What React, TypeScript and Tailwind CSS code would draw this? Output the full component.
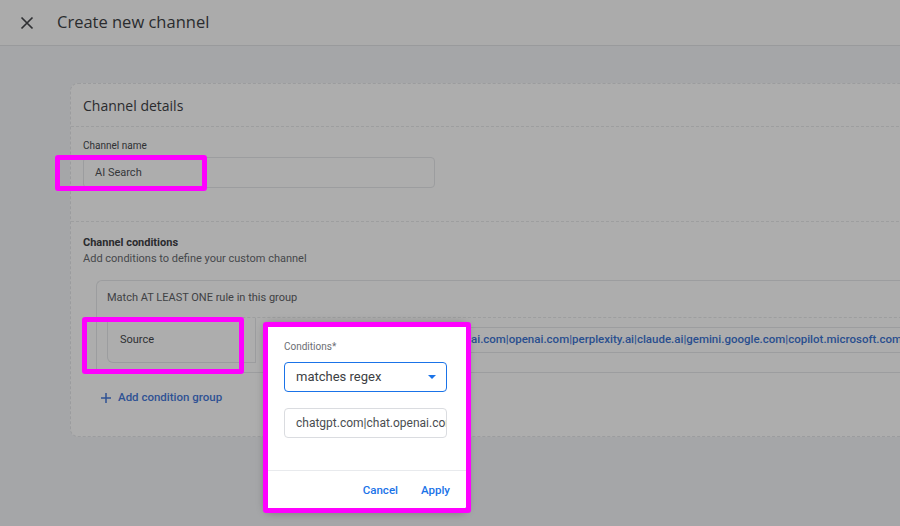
import React from "react";

export default function App() {
  return (
    <div
      className="relative w-[900px] h-[526px] overflow-hidden bg-[#a5a6a8] flex flex-col"
      style={{ fontFamily: "Roboto, 'Noto Sans', Arial, sans-serif" }}
    >
      {/* header */}
      <div className="h-[46px] shrink-0 bg-[#ababab] border-b border-[#999a9c] flex items-center">
        <svg width="14" height="14" viewBox="0 0 14 14" className="ml-[20px]">
          <path d="M1.5 1.5 L12.5 12.5 M12.5 1.5 L1.5 12.5" stroke="#2f3033" strokeWidth="1.7" />
        </svg>
        <span className="ml-[23px] text-[16.5px] text-[#2a2b2e]" style={{ fontFamily: "'Open Sans', Roboto, sans-serif" }}>
          Create new channel
        </span>
      </div>

      {/* main */}
      <div className="flex-1 pt-[37px] pl-[70px]">
        <div className="w-[860px] h-[354px] rounded-[8px] border border-dashed border-[#9b9c9e] bg-[#adadad] flex flex-col">
          <div className="h-[43px] px-[12px] flex items-center border-b border-dashed border-[#9d9e9f]">
            <span className="text-[14px] text-[#2a2b2e]" style={{ fontFamily: "'Open Sans', Roboto, sans-serif" }}>
              Channel details
            </span>
          </div>
          <div className="px-[12px] pt-[13px] pb-[33px] border-b border-dashed border-[#9d9e9f]">
            <div className="text-[10px] leading-[12px] text-[#2e3033]">Channel name</div>
            <div className="mt-[5px] w-[352px] h-[31px] rounded-[4px] border border-[#9c9d9f] flex items-center pl-[11px] pt-[1px] text-[11px] text-[#35373a]">
              AI Search
            </div>
          </div>
          <div className="px-[12px] pt-[14px]">
            <div className="text-[11px] leading-[14px] font-bold text-[#2a2b2e]">Channel conditions</div>
            <div className="text-[11px] leading-[16px] mt-[1px] text-[#46484b]">Add conditions to define your custom channel</div>
            <div className="mt-[13px] ml-[13px] h-[93px] rounded-tl-[6px] border-l border-t border-b border-[#9c9d9f] flex flex-col">
              <div className="h-[37px] shrink-0 flex items-center pl-[10px] pb-[1px] border-b border-dashed border-[#9d9e9f] text-[11px] text-[#3f4144]">
                Match AT LEAST ONE rule in this group
              </div>
              <div className="flex h-[45px] pl-[10px]">
                <div className="w-[149px] h-[45px] rounded-bl-[6px] border-l border-b border-r border-[#9c9d9f] flex items-center pl-[12px] text-[11px] text-[#2e3033]">
                  Source
                </div>
                <div className="flex-1 ml-[10px] mt-[9px] h-[26px] border-t border-b border-[#9c9d9f] flex items-center overflow-hidden whitespace-nowrap text-[11.5px] font-medium text-[#2a4f8f]">
                  <span className="w-[86px] shrink-0 pl-[10px] text-[#35373a] font-normal">matches regex</span>
                  <span>chatgpt.com|chat.openai.com|openai.com|perplexity.ai|claude.ai|gemini.google.com|copilot.microsoft.com|chat.deepseek.com</span>
                </div>
              </div>
            </div>
            <div className="mt-[16px] ml-[17px] flex items-center gap-[6px] text-[11.5px] font-medium text-[#2f5294]">
              <svg width="12" height="12" viewBox="0 0 12 12">
                <path d="M6 1 V11 M1 6 H11" stroke="#2f5294" strokeWidth="1.5" />
              </svg>
              Add condition group
            </div>
          </div>
        </div>
      </div>

      {/* popup */}
      <div className="absolute left-[265px] top-[322px] w-[202px] h-[188px] bg-white rounded-[6px] shadow-[0_2px_8px_rgba(0,0,0,0.35)] flex flex-col">
        <div className="px-[19px] pt-[18px]">
          <div className="text-[10px] leading-[13px] text-[#6b6e72]">Conditions*</div>
          <div className="mt-[9px] w-[163px] h-[30px] rounded-[4px] border-[1.5px] border-[#1a73e8] flex items-center justify-between pl-[11px] pr-[10px] text-[13px] text-[#3c4043]">
            <span>matches regex</span>
            <svg width="8" height="5" viewBox="0 0 8 5">
              <path d="M0 0 L8 0 L4 4 Z" fill="#1a73e8" />
            </svg>
          </div>
          <div className="mt-[16px] w-[163px] h-[30px] rounded-[4px] border border-[#dadce0] flex items-center pl-[11px] overflow-hidden whitespace-nowrap text-[12px] text-[#4a4d51]">
            chatgpt.com|chat.openai.com|openai.com
          </div>
        </div>
        <div className="mt-auto h-[40px] pt-[1px] border-t border-[#e8eaed] flex items-center justify-end gap-[23px] pr-[17px] text-[11.5px] font-medium text-[#1a73e8]">
          <span>Cancel</span>
          <span>Apply</span>
        </div>
      </div>

      {/* annotation boxes */}
      <div className="absolute left-[55px] top-[155px] w-[152px] h-[36px] border-[5px] border-[#ff00ff] rounded-[3px]" />
      <div className="absolute left-[82px] top-[317px] w-[162px] h-[57px] border-[5px] border-[#ff00ff] rounded-[3px]" />
      <div className="absolute left-[263px] top-[322px] w-[208px] h-[191px] border-[5px] border-[#ff00ff] rounded-[3px]" />
    </div>
  );
}
